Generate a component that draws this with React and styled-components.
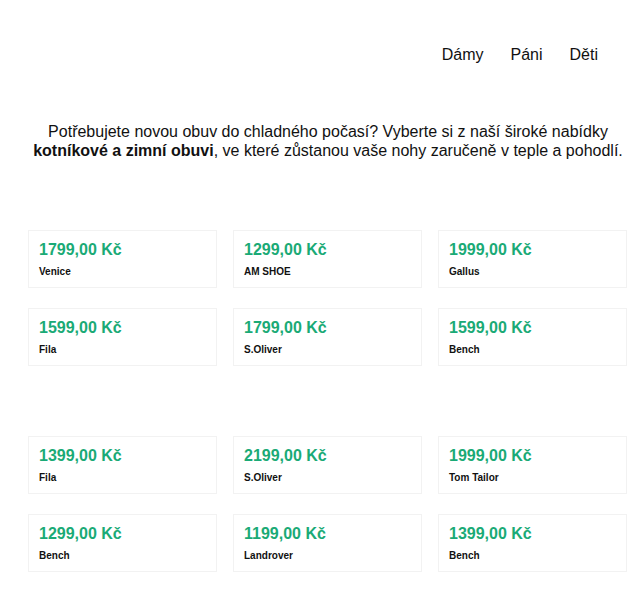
import React from "react";
import styled, { createGlobalStyle } from "styled-components";

const groups = [
  [
    { price: "1799,00 Kč", brand: "Venice" },
    { price: "1299,00 Kč", brand: "AM SHOE" },
    { price: "1999,00 Kč", brand: "Gallus" },
    { price: "1599,00 Kč", brand: "Fila" },
    { price: "1799,00 Kč", brand: "S.Oliver" },
    { price: "1599,00 Kč", brand: "Bench" },
  ],
  [
    { price: "1399,00 Kč", brand: "Fila" },
    { price: "2199,00 Kč", brand: "S.Oliver" },
    { price: "1999,00 Kč", brand: "Tom Tailor" },
    { price: "1299,00 Kč", brand: "Bench" },
    { price: "1199,00 Kč", brand: "Landrover" },
    { price: "1399,00 Kč", brand: "Bench" },
  ],
];

const App = () => (
  <>
    <GlobalStyle />
    <Page>
      <Nav>
        <NavLink href="#">Dámy</NavLink>
        <NavLink href="#">Páni</NavLink>
        <NavLink href="#">Děti</NavLink>
      </Nav>
      <Intro>
        Potřebujete novou obuv do chladného počasí? Vyberte si z naší široké
        nabídky <strong>kotníkové a zimní obuvi</strong>, ve které zůstanou vaše
        nohy zaručeně v teple a pohodlí.
      </Intro>
      {groups.map((items, i) => (
        <Grid key={i}>
          {items.map((item, j) => (
            <Card key={j}>
              <Price>{item.price}</Price>
              <Brand>{item.brand}</Brand>
            </Card>
          ))}
        </Grid>
      ))}
    </Page>
  </>
);

export default App;

const GlobalStyle = createGlobalStyle`
  body {
    margin: 0;
    background: #fff;
    font-family: "Liberation Sans", Arial, sans-serif;
    color: #111;
  }
`;

const Page = styled.div`
  width: 600px;
  margin-left: 28px;
`;

const Nav = styled.nav`
  display: flex;
  justify-content: flex-end;
  gap: 27px;
  padding: 46px 30px 0 0;
`;

const NavLink = styled.a`
  font-size: 16px;
  line-height: 18px;
  color: #111;
  text-decoration: none;
`;

const Intro = styled.p`
  margin: 58px 0 70px;
  font-size: 16px;
  line-height: 19px;
  text-align: center;

  strong {
    font-weight: bold;
  }
`;

const Grid = styled.div`
  display: grid;
  grid-template-columns: repeat(3, 189px);
  gap: 20px 16px;
  margin-bottom: 70px;

  &:last-child {
    margin-bottom: 0;
  }
`;

const Card = styled.div`
  border: 1px solid #f2f2f2;
  padding: 10px 10px 9px;
`;

const Price = styled.div`
  font-size: 16px;
  line-height: 18px;
  font-weight: bold;
  color: #1aaa76;
  margin-bottom: 6px;
`;

const Brand = styled.div`
  font-size: 10px;
  line-height: 13px;
  font-weight: bold;
  color: #111;
`;
